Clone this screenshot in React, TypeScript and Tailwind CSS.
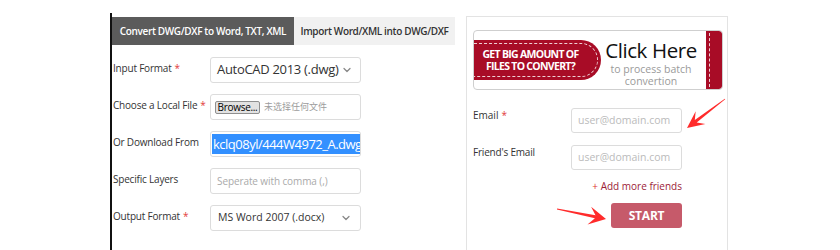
import { ChevronDown } from 'lucide-react';

type Pt = [number, number];

// builds a swept-back arrow polygon from tail to tip
function arrowPoints(tail: Pt, tip: Pt, headLen: number, headW: number, notch: number, tailW: number, neckW: number) {
  const dx = tip[0] - tail[0];
  const dy = tip[1] - tail[1];
  const len = Math.hypot(dx, dy);
  const ux = dx / len;
  const uy = dy / len;
  const nx = -uy;
  const ny = ux;
  const at = (d: number, o: number): string =>
    `${(tail[0] + ux * d + nx * o).toFixed(1)},${(tail[1] + uy * d + ny * o).toFixed(1)}`;
  const neck = len - headLen + notch;
  const wing = len - headLen;
  return [
    at(0, tailW / 2),
    at(neck, neckW / 2),
    at(wing, headW),
    at(len, 0),
    at(wing, -headW),
    at(neck, -neckW / 2),
    at(0, -tailW / 2),
  ].join(' ');
}

function Req() {
  return <span className="text-[#e23b3b] ml-[3px]">*</span>;
}

function FormRow({ label, required, children }: { label: string; required?: boolean; children: React.ReactNode }) {
  return (
    <div className="flex items-start h-[26px]">
      <div className="w-[97px] pt-[4px] text-[10px] leading-[14px] text-[#333] tracking-[-0.2px]">
        {label}
        {required && <Req />}
      </div>
      {children}
    </div>
  );
}

function Box({ children, className = '' }: { children?: React.ReactNode; className?: string }) {
  return (
    <div
      className={`w-[151px] h-[26px] border border-[#dcdcdc] rounded-[3px] bg-white flex items-center ${className}`}
    >
      {children}
    </div>
  );
}

export default function App() {
  return (
    <div className="relative w-[840px] h-[250px] bg-white overflow-hidden font-['Open_Sans','Liberation_Sans',sans-serif]">
      <div className="flex pt-[13px]">
        {/* converter form */}
        <div className="ml-[110px] w-[345px] h-[237px] border-l-2 border-[#111] pt-[4px]">
          <div className="flex h-[28px]">
            <div className="w-[182px] bg-[#5b5b5b] text-white text-[10px] font-semibold flex items-center justify-center tracking-[-0.35px]">
              Convert DWG/DXF to Word, TXT, XML
            </div>
            <div className="w-[161px] bg-[#f1f1f1] text-[#333] text-[10px] font-semibold flex items-center justify-center tracking-[-0.35px]">
              Import Word/XML into DWG/DXF
            </div>
          </div>

          <div className="pt-[12px] pl-[1px] flex flex-col gap-[11px]">
            <FormRow label="Input Format" required>
              <Box className="pl-[6px] pr-[7px] justify-between">
                <span className="text-[13px] text-[#333] tracking-[-0.3px]">AutoCAD 2013 (.dwg)</span>
                <ChevronDown size={12} strokeWidth={2.5} className="text-[#888]" />
              </Box>
            </FormRow>

            <FormRow label="Choose a Local File" required>
              <Box className="pl-[4px] gap-[4px]">
                <span className="h-[13px] w-[45px] bg-[#e2e2e2] border border-[#8f8f8f] rounded-[2px] text-[10px] leading-[11px] text-black text-center tracking-[-0.3px]">
                  Browse...
                </span>
                <span className="text-[9px] text-[#9c9c9c] font-['Noto_Sans_CJK_SC',sans-serif]">未选择任何文件</span>
              </Box>
            </FormRow>

            <FormRow label="Or Download From">
              <Box className="pl-[1px] overflow-hidden">
                <span className="bg-[#3390ff] text-white text-[13px] leading-[20px] tracking-[-0.5px] whitespace-nowrap px-[1px]">
                  kclq08yl/444W4972_A.dwg
                </span>
              </Box>
            </FormRow>

            <FormRow label="Specific Layers">
              <Box className="pl-[6px]">
                <span className="text-[10px] text-[#aaa] tracking-[-0.1px]">Seperate with comma (,)</span>
              </Box>
            </FormRow>

            <FormRow label="Output Format" required>
              <Box className="pl-[7px] pr-[8px] justify-between">
                <span className="text-[10.5px] text-[#333]">MS Word 2007 (.docx)</span>
                <ChevronDown size={12} strokeWidth={2.5} className="text-[#888]" />
              </Box>
            </FormRow>
          </div>
        </div>

        {/* batch / email panel */}
        <div className="ml-[11px] mt-[3px] w-[262px] h-[240px] border border-[#e3e3e3] pl-[6px] pt-[13px]">
          <div className="relative w-[250px] h-[60px] border border-[#cfcfcf] rounded-[4px] flex overflow-hidden">
            <div className="relative mt-[9px] w-[127px] h-[40px] bg-[#a80c26] rounded-r-[20px] flex flex-col items-center justify-center pr-[14px]">
              <div className="absolute top-[3px] bottom-[3px] left-0 right-[3px] border border-l-0 border-dashed border-white/80 rounded-r-[17px]" />
              <span className="text-white font-bold text-[10.5px] leading-[12.5px] tracking-[-0.7px]">GET BIG AMOUNT OF</span>
              <span className="text-white font-bold text-[10.5px] leading-[12.5px] tracking-[-0.7px]">FILES TO CONVERT?</span>
            </div>
            <div className="flex-1 flex flex-col items-center pt-[7px] pr-[5px]">
              <span className="text-[20.5px] leading-[25px] text-[#111] tracking-[-0.4px]">Click Here</span>
              <span className="text-[10.5px] leading-[12px] text-[#9a9a9a] tracking-[0px] whitespace-nowrap">to process batch</span>
              <span className="text-[10.5px] leading-[12px] text-[#9a9a9a] tracking-[0px]">convertion</span>
            </div>
            <div className="relative w-[16px] h-full bg-[#a80c26] rounded-r-[3px]">
              <div className="absolute top-[2px] bottom-[2px] left-[3px] border-l border-dashed border-white/80" />
            </div>
          </div>

          <div className="mt-[18px] flex flex-col">
            <div className="flex items-start h-[25px]">
              <div className="w-[98px] text-[10px] leading-[14px] text-[#333]">
                Email
                <Req />
              </div>
              <div className="w-[111px] h-[25px] border border-[#dcdcdc] rounded-[3px] flex items-center pl-[6px] text-[10.5px] text-[#bbb]">
                user@domain.com
              </div>
            </div>
            <div className="mt-[12px] flex items-start h-[25px]">
              <div className="w-[98px] text-[10px] leading-[14px] text-[#333] tracking-[-0.2px]">Friend's Email</div>
              <div className="w-[111px] h-[25px] border border-[#dcdcdc] rounded-[3px] flex items-center pl-[6px] text-[10.5px] text-[#bbb]">
                user@domain.com
              </div>
            </div>
            <div className="mt-[9px] w-[209px] text-right text-[10px] leading-[14px] text-[#9c2238]">
              <span className="text-[#d33]">+</span> Add more friends
            </div>
            <div className="mt-[10px] w-[209px] flex justify-end">
              <div className="w-[71px] h-[25px] bg-[#c65a6a] rounded-[3px] flex items-center justify-center text-white font-bold text-[12px] tracking-[-0.2px]">
                START
              </div>
            </div>
          </div>
        </div>
      </div>

      {/* annotation arrows */}
      <svg className="absolute left-0 top-0 pointer-events-none" width="840" height="250" viewBox="0 0 840 250">
        <polygon points={arrowPoints([725, 99], [687, 128], 17, 8, 6, 0.8, 3)} fill="#ff2b2b" />
        <polygon points={arrowPoints([557, 209], [606, 219], 17, 9, 6, 0.8, 3)} fill="#ff2b2b" />
      </svg>
    </div>
  );
}
